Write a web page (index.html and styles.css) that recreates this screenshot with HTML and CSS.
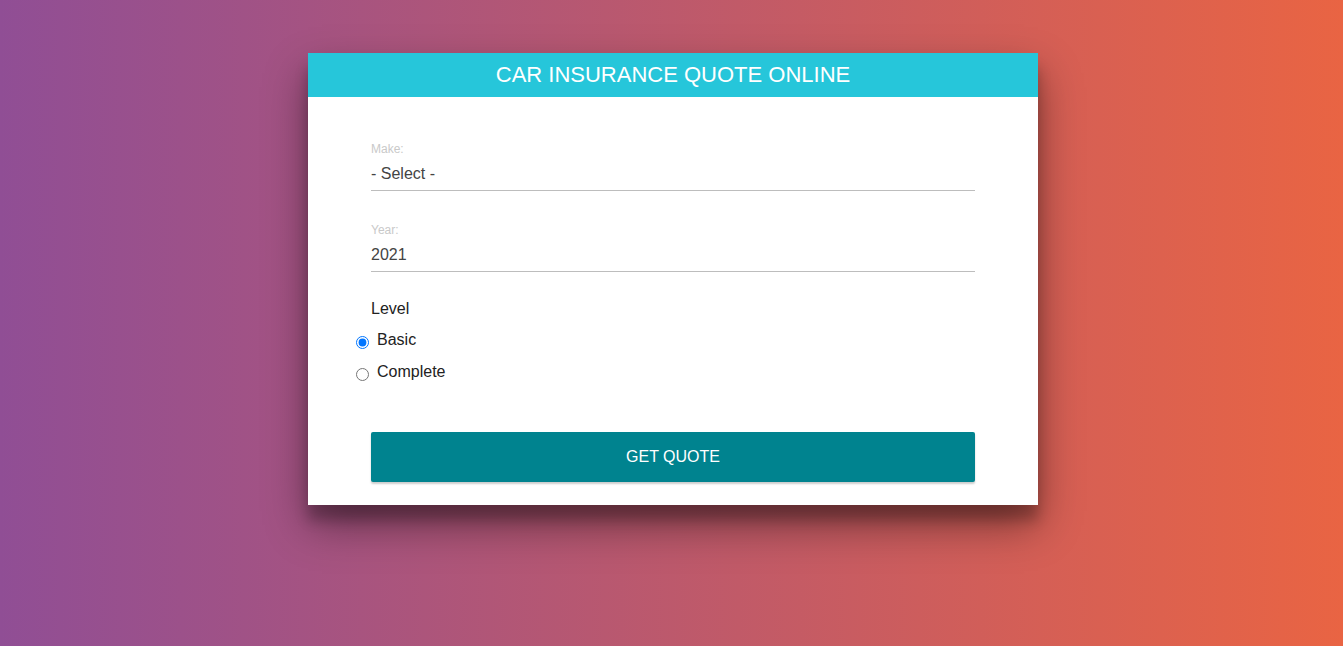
FILE: index.html
```html
<!DOCTYPE html>
<html lang="en">
<head>
<meta charset="utf-8">
<title>Car Insurance Quote Online</title>
<link rel="stylesheet" href="styles.css">
</head>
<body>
<div class="page">
  <div class="card">
    <header class="card-header">CAR INSURANCE QUOTE ONLINE</header>
    <form class="card-body">
      <div class="field">
        <label class="field-label" for="make">Make:</label>
        <select id="make" class="field-control">
          <option>- Select -</option>
        </select>
      </div>
      <div class="field">
        <label class="field-label" for="year">Year:</label>
        <select id="year" class="field-control">
          <option>2021</option>
        </select>
      </div>
      <div class="level">
        <div class="level-title">Level</div>
        <label class="radio"><input type="radio" name="level" checked>Basic</label>
        <label class="radio"><input type="radio" name="level">Complete</label>
      </div>
      <button type="button" class="btn">GET QUOTE</button>
    </form>
  </div>
</div>
</body>
</html>
```
FILE: styles.css
```css
html, body {
  margin: 0;
  padding: 0;
}
body {
  min-height: 100vh;
  background: linear-gradient(to right, #904e95, #e96443);
  font-family: "Liberation Sans", Arial, sans-serif;
}
.page {
  display: flex;
  justify-content: center;
  padding: 53px 0 0 3px;
}
.card {
  width: 730px;
  background: #fff;
  box-shadow: 0 20px 40px rgba(0, 0, 0, 0.42), 0 15px 12px rgba(0, 0, 0, 0.22);
}
.card-header {
  height: 44px;
  line-height: 44px;
  background: #26c6da;
  color: #fff;
  text-align: center;
  font-size: 22px;
}
.card-body {
  display: flex;
  flex-direction: column;
  padding: 45px 63px 23px;
}
.field {
  display: flex;
  flex-direction: column;
  margin-bottom: 32px;
}
.field-label {
  font-size: 12px;
  line-height: 14px;
  color: #c9c9c9;
}
.field-control {
  appearance: none;
  -webkit-appearance: none;
  box-sizing: border-box;
  height: 35px;
  margin: 0;
  padding: 7px 0 6px;
  border: none;
  border-bottom: 1px solid #bdbdbd;
  border-radius: 0;
  background: transparent;
  font-family: inherit;
  font-size: 16px;
  line-height: 20px;
  color: #444;
  outline: none;
}
.level {
  display: flex;
  flex-direction: column;
  margin-top: -5px;
}
.level-title {
  font-size: 16px;
  line-height: 20px;
  color: #222;
  margin-bottom: 11px;
}
.radio {
  display: flex;
  align-items: flex-start;
  margin-left: -20px;
  font-size: 16px;
  line-height: 20px;
  color: #222;
  margin-bottom: 12px;
}
.radio input {
  margin: 6px 8px 0 5px;
}
.btn {
  margin-top: 38px;
  height: 50px;
  border: none;
  border-radius: 2px;
  background: #00838f;
  color: #fff;
  font-family: inherit;
  font-size: 16px;
  box-shadow: 0 2px 2px rgba(0, 0, 0, 0.2);
  cursor: pointer;
}
```
